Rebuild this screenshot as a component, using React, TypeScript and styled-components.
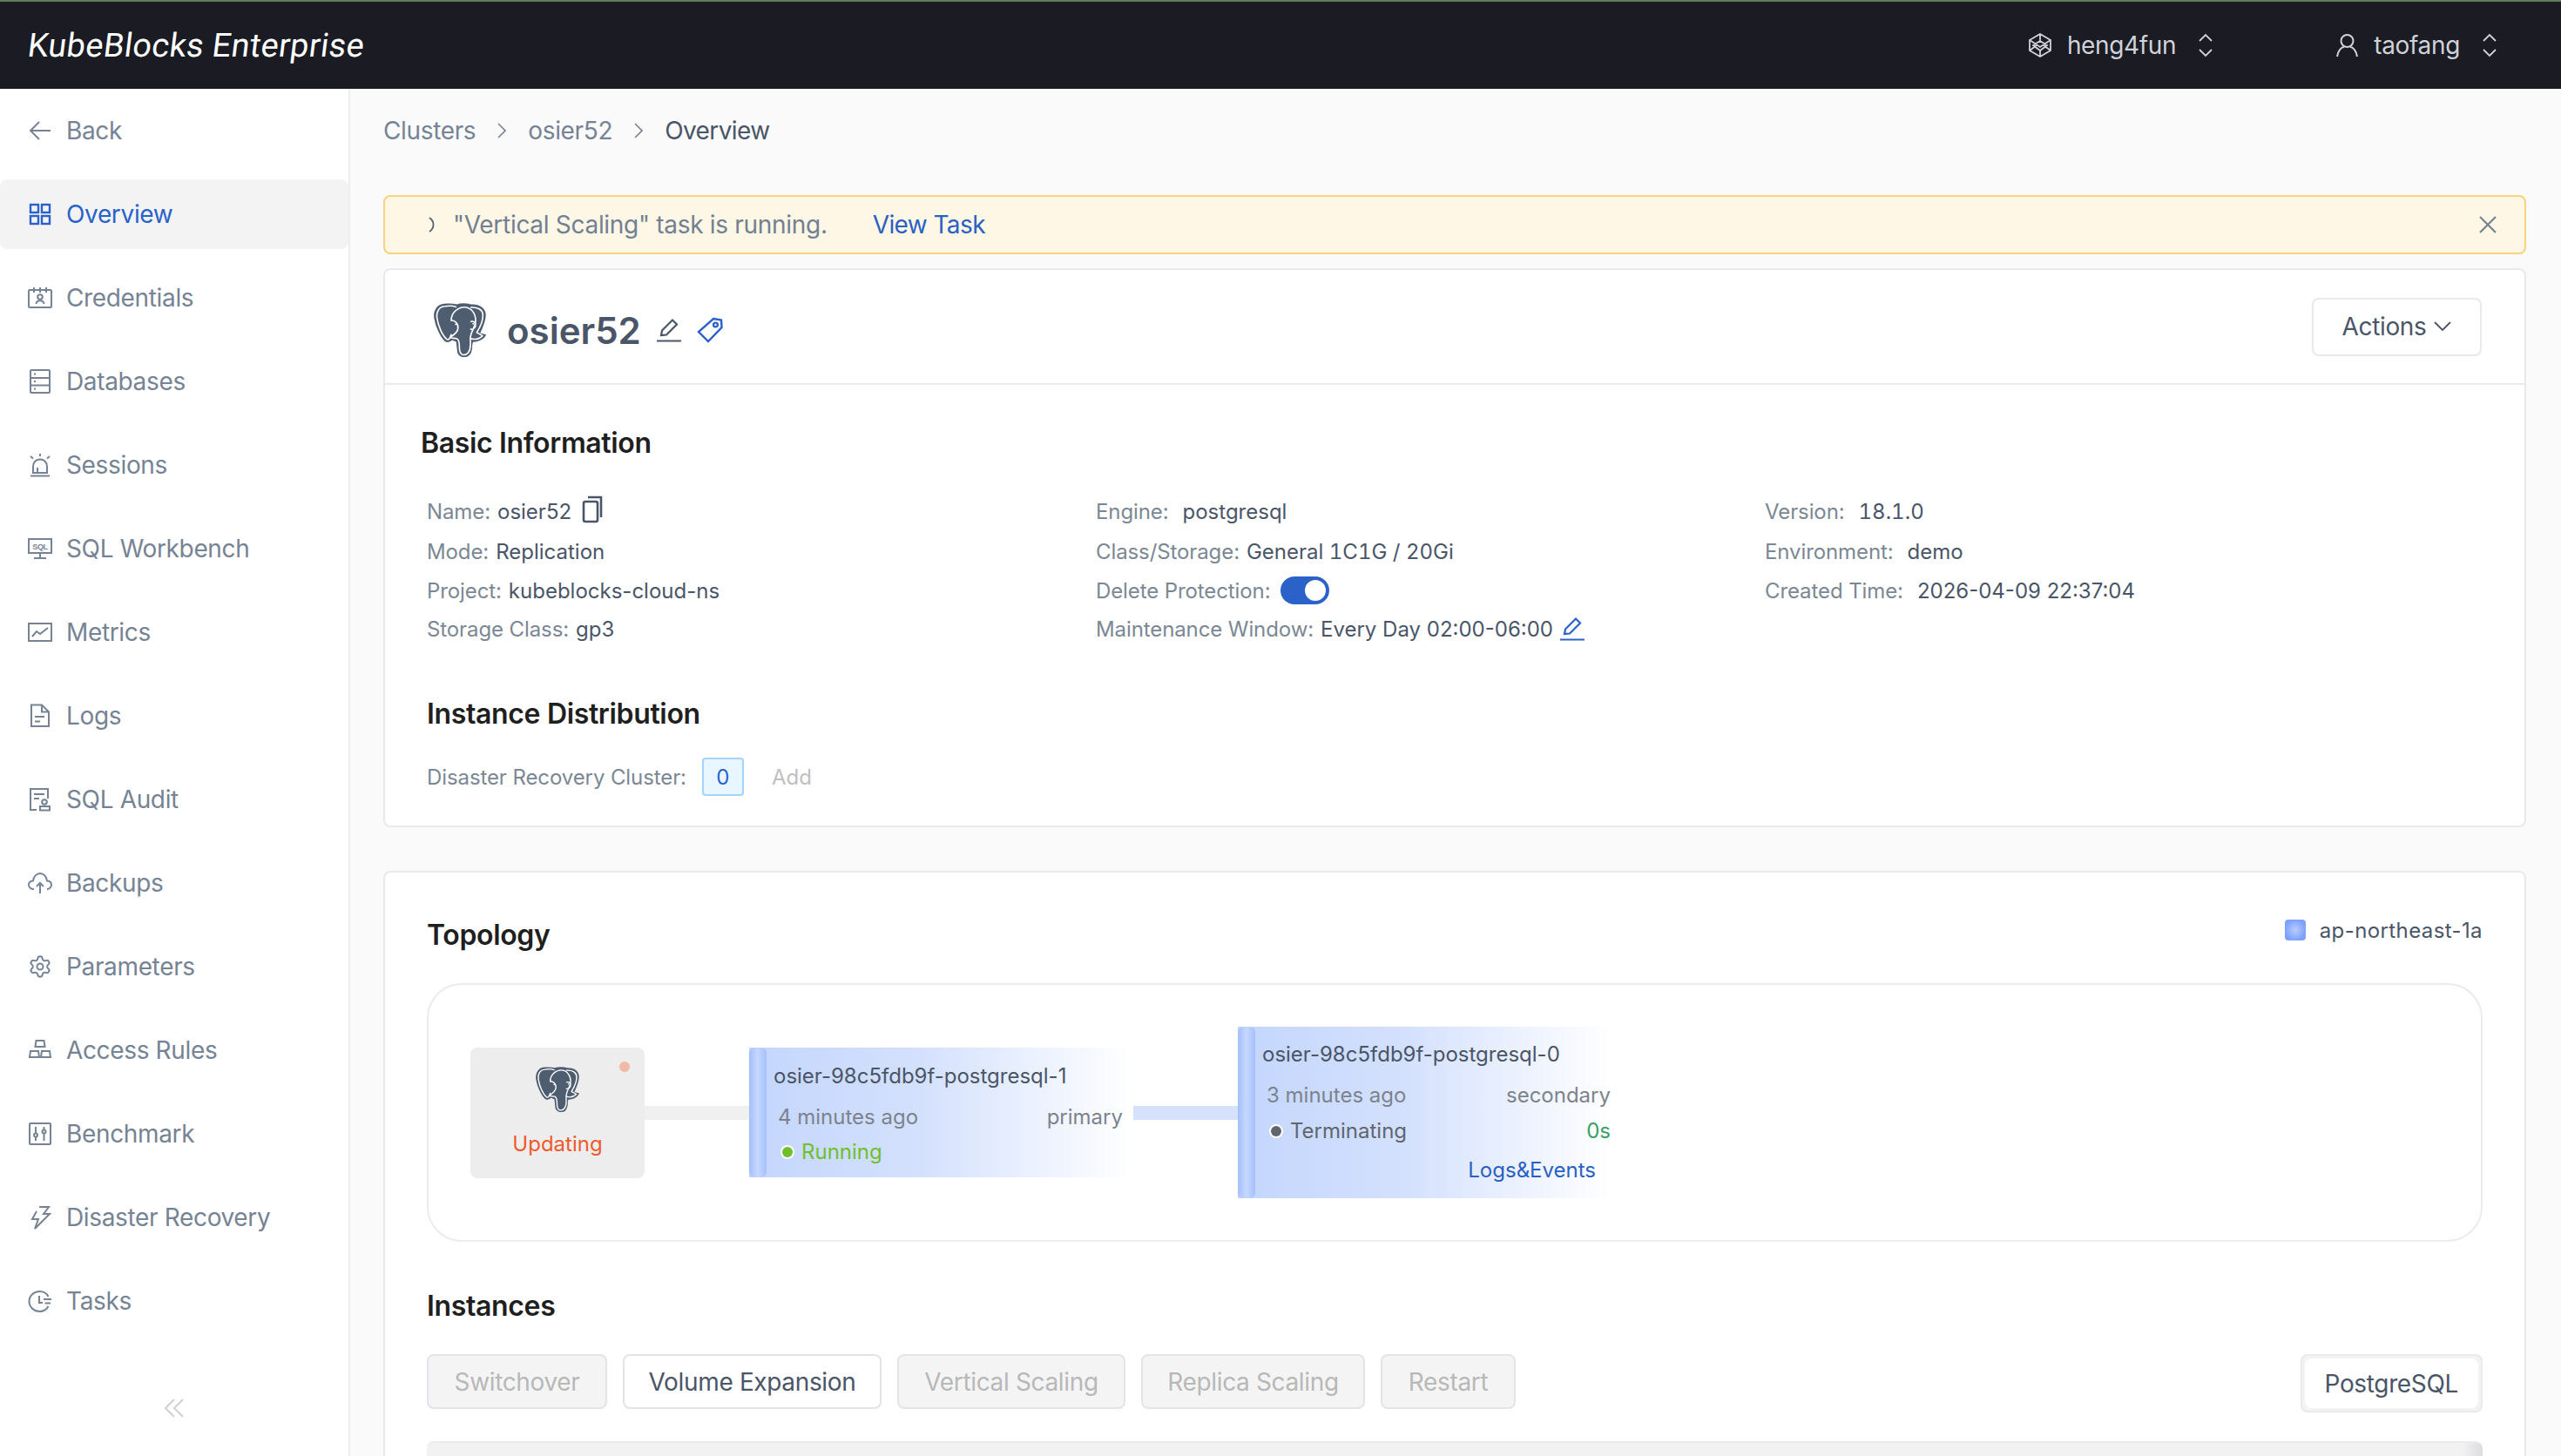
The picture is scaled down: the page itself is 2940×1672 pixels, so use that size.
import React from 'react'
import styled, { createGlobalStyle } from 'styled-components'
import { Settings } from 'lucide-react'

const GlobalStyle = createGlobalStyle`
  html, body {
    margin: 0;
    padding: 0;
    height: 100%;
    overflow: hidden;
    background: #fafafa;
    font-family: Inter, "Liberation Sans", sans-serif;
  }
  * { box-sizing: border-box; }
`

const Page = styled.div`
  display: flex;
  flex-direction: column;
  height: 1672px;
  overflow: hidden;
`

const TopBar = styled.header`
  flex: none;
  display: flex;
  align-items: center;
  height: 102px;
  padding: 0 73px 0 32px;
  border-top: 2px solid #5f7f55;
  background: #1a1b23;
`

const Logo = styled.div`
  font-family: Roboto, sans-serif;
  font-size: 38px;
  font-weight: 400;
  letter-spacing: 0.3px;
  color: #fff;
  transform: skewX(-7deg);
`

const Switchers = styled.div`
  margin-left: auto;
  display: flex;
  align-items: center;
  gap: 141px;
`

const Switcher = styled.div`
  display: flex;
  align-items: center;
  color: #cfd2d8;
  font-size: 28px;
  line-height: 40px;
  letter-spacing: -0.35px;
`

const SwitcherLabel = styled.span`
  margin: 0 25px 0 18px;
`

const Body = styled.div`
  flex: 1;
  display: flex;
  min-height: 0;
`

const Sidebar = styled.aside`
  flex: none;
  width: 402px;
  display: flex;
  flex-direction: column;
  padding-top: 8px;
  border-right: 2px solid #eeeef1;
  background: #fff;
`

const NavList = styled.nav`
  display: flex;
  flex-direction: column;
  gap: 16px;
`

const NavItem = styled.a<{ $active?: boolean }>`
  display: flex;
  align-items: center;
  gap: 16px;
  height: 80px;
  padding-left: 32px;
  border-radius: 8px;
  font-size: 28px;
  letter-spacing: -0.35px;
  color: ${p => (p.$active ? '#2a62c9' : '#768394')};
  background: ${p => (p.$active ? '#f3f3f3' : 'transparent')};
`

const Collapse = styled.div`
  margin-top: auto;
  height: 48px;
  margin-bottom: 31px;
  display: flex;
  align-items: center;
  justify-content: center;
  color: #cdd1d6;
`

const Icon = styled.svg.attrs<{ stroke?: string; strokeWidth?: number | string }>(p => ({
  fill: 'none',
  stroke: p.stroke ?? 'currentColor',
  strokeWidth: p.strokeWidth ?? 2,
}))`
  flex: none;
  display: block;
`

const Main = styled.main`
  flex: 1;
  min-width: 0;
  overflow: hidden;
  padding: 24px 40px 0 38px;
`

const Crumbs = styled.div`
  display: flex;
  align-items: center;
  height: 48px;
  margin-bottom: 50px;
  font-size: 28px;
  letter-spacing: -0.35px;
  color: #768394;
`

const Crumb = styled.span<{ $current?: boolean }>`
  color: ${p => (p.$current ? '#4a5568' : '#768394')};
  letter-spacing: ${p => (p.$current ? '-0.6px' : 'inherit')};
`

const CrumbSep = styled.span`
  display: flex;
  width: 60px;
  justify-content: center;
  color: #768394;
`

const Alert = styled.div`
  display: flex;
  align-items: center;
  height: 68px;
  padding: 0 32px 0 50px;
  border: 2px solid #f9d27d;
  border-radius: 8px;
  background: #fef7e6;
  font-size: 28px;
  letter-spacing: -0.3px;
  color: #728091;
`

const AlertText = styled.span`
  margin-left: 20px;
`

const TextLink = styled.a`
  color: #2a5fc4;
`

const AlertLink = styled(TextLink)`
  margin-left: 52px;
  letter-spacing: -0.6px;
`

const AlertClose = styled.span`
  margin-left: auto;
  display: flex;
  color: #768394;
`

const Card = styled.section`
  border: 2px solid #e9e9ed;
  border-radius: 8px;
  background: #fff;
`

const SummaryCard = styled(Card)`
  margin-top: 16px;
`

const TopologyCard = styled(Card)`
  margin-top: 50px;
  padding: 44px 48px 0;
  height: 800px;
`

const CardHead = styled.div`
  display: flex;
  align-items: center;
  height: 132px;
  padding: 8px 49px 0 56px;
  border-bottom: 2px solid #e9e9ed;
`

const ClusterName = styled.h1`
  margin: 0 18px 0 24px;
  font-size: 42px;
  font-weight: 600;
  color: #4a5568;
`

const HeadIcons = styled.div`
  display: flex;
  align-items: center;
  gap: 18px;
`

const ActionsButton = styled.button`
  margin: -8px 0 0 auto;
  display: flex;
  align-items: center;
  gap: 9px;
  height: 67px;
  width: 195px;
  justify-content: center;
  border: 2px solid #e9e9ed;
  border-radius: 8px;
  background: #fff;
  font: inherit;
  font-size: 28px;
  letter-spacing: -0.35px;
  color: #4a5568;
`

const CardBody = styled.div`
  padding: 45px 48px 34px;
`

const SectionTitle = styled.h2<{ $shift?: number }>`
  margin: 0 0 0 ${p => p.$shift ?? 0}px;
  font-size: 32px;
  line-height: 44px;
  font-weight: 600;
  letter-spacing: -0.35px;
  color: #1f1f1f;
`

const InfoGrid = styled.div`
  margin: 33px 0 54px;
  display: grid;
  grid-template-columns: repeat(3, 768px);
  grid-template-rows: 47px 45px 44px 44px;
  align-items: center;
`

const InfoRow = styled.div`
  display: flex;
  align-items: center;
  gap: 8px;
  font-size: 24px;
  color: #4a5568;
`

const InfoLabel = styled.span<{ $wide?: boolean }>`
  color: #7b8794;
  letter-spacing: -0.1px;
  margin-right: ${p => (p.$wide ? 8 : 0)}px;
`

const TabularValue = styled.span`
  font-variant-numeric: tabular-nums;
`

const CopyButton = styled.span`
  display: flex;
  margin: -6px 0 0 4px;
  color: #4a5568;
`

const Toggle = styled.span`
  display: flex;
  justify-content: flex-end;
  align-items: center;
  width: 56px;
  height: 32px;
  margin-left: 3px;
  padding: 4px;
  border-radius: 16px;
  background: #2a62c9;
`

const ToggleKnob = styled.span`
  width: 24px;
  height: 24px;
  border-radius: 50%;
  background: #fff;
`

const DrRow = styled(InfoRow)`
  margin-top: 28px;
  height: 44px;
  gap: 0;
`

const CountBadge = styled.span`
  display: flex;
  align-items: center;
  justify-content: center;
  width: 48px;
  height: 44px;
  margin-left: 18px;
  border: 2px solid #a3d5fb;
  border-radius: 4px;
  background: #e8f6ff;
  color: #2a62c9;
`

const AddLink = styled.span`
  margin-left: 32px;
  color: #bfbfbf;
`

const TopologyHead = styled.div`
  display: flex;
  justify-content: space-between;
  align-items: flex-start;
  margin-bottom: 27px;
`

const TopologyTitle = styled(SectionTitle)`
  line-height: 56px;
`

const ZoneLabel = styled.div`
  display: flex;
  align-items: center;
  gap: 16px;
  height: 44px;
  font-size: 24px;
  letter-spacing: 0.4px;
  color: #4a5568;
`

const ZoneSwatch = styled.span`
  width: 24px;
  height: 24px;
  border-radius: 4px;
  background: radial-gradient(circle, #b9ccfd 0%, #7ea2fa 70%);
`

const TopologyBox = styled.div`
  display: flex;
  align-items: center;
  height: 297px;
  padding-left: 48px;
  border: 2px solid #ebebef;
  border-radius: 40px;
`

const ClusterNode = styled.div`
  position: relative;
  flex: none;
  display: flex;
  flex-direction: column;
  align-items: center;
  width: 200px;
  height: 150px;
  padding-top: 22px;
  border-radius: 8px;
  background: #ededed;
`

const ClusterDot = styled.span`
  position: absolute;
  top: 16px;
  right: 17px;
  width: 12px;
  height: 12px;
  border-radius: 50%;
  background: #f0b9a8;
`

const ClusterStatus = styled.span`
  margin-top: 21px;
  font-size: 24px;
  line-height: 32px;
  color: #ee5a2c;
`

const Link = styled.div<{ $color: string }>`
  flex: none;
  width: 120px;
  height: 16px;
  background: ${p => p.$color};
`

const InstanceNode = styled.div<{ $width: number; $height: number }>`
  flex: none;
  display: flex;
  width: ${p => p.$width}px;
  height: ${p => p.$height}px;
  background: linear-gradient(90deg, #c3d6fd 0%, #d4e1fd 45%, #ffffff 100%);
`

const NodeBar = styled.div`
  flex: none;
  width: 20px;
  border-radius: 6px;
  background: linear-gradient(90deg, #a5bffa 0%, #c6d8ff 50%, #a5bffa 100%);
`

const NodeBody = styled.div<{ $top: number; $right: number }>`
  flex: 1;
  min-width: 0;
  padding: ${p => p.$top}px ${p => p.$right}px 0 8px;
  font-size: 24px;
  line-height: 32px;
  white-space: nowrap;
`

const NodeTitle = styled.div`
  color: #4a5568;
`

const NodeRow = styled.div<{ $gap: number }>`
  display: flex;
  justify-content: space-between;
  margin-top: ${p => p.$gap}px;
  padding-left: 5px;
  color: #7c838e;
`

const NodeStatus = styled.span<{ $color: string }>`
  display: flex;
  align-items: center;
  gap: 10px;
  color: ${p => p.$color};
`

const StatusDot = styled.span<{ $color: string }>`
  width: 12px;
  height: 12px;
  margin-left: 5px;
  border-radius: 50%;
  background: ${p => p.$color};
  box-shadow: 0 0 0 2px #fff;
`

const Elapsed = styled.span`
  color: #3a9e6a;
`

const NodeAction = styled(TextLink)`
  display: block;
  margin-top: 13px;
  padding-right: 17px;
  text-align: right;
`

const InstancesTitle = styled(TopologyTitle)`
  margin-top: 46px;
`

const InstanceToolbar = styled.div`
  margin-top: 27px;
  display: flex;
  justify-content: space-between;
  align-items: flex-start;
`

const OpButtons = styled.div`
  display: flex;
  gap: 18px;
`

const OpButton = styled.button<{ $enabled?: boolean; $width: number }>`
  width: ${p => p.$width}px;
  height: 63px;
  padding: 0;
  border: 2px solid #e4e4e8;
  border-radius: 8px;
  font: inherit;
  font-size: 28px;
  letter-spacing: -0.35px;
  color: ${p => (p.$enabled ? '#4a5568' : '#b8b8b8')};
  background: ${p => (p.$enabled ? '#fff' : '#f4f4f5')};
`

const EngineTabs = styled.div`
  display: flex;
  padding: 3px 3px;
  height: 67px;
  border: 2px solid #e9e9ee;
  border-radius: 8px;
  background: #f3f3f5;
`

const EngineTab = styled.div`
  display: flex;
  align-items: center;
  padding: 0 23px;
  border-radius: 8px;
  background: #fff;
  font-size: 28px;
  letter-spacing: -0.35px;
  color: #4a5568;
`

const TableHead = styled.div`
  margin-top: 33px;
  height: 80px;
  border-radius: 8px 8px 0 0;
  border-top: 2px solid #ebebef;
  background: linear-gradient(90deg, #f2f2f3 99%, #dcdcde 100%);
`

function PgLogo({ width, height }: { width: number; height: number }) {
  return (
    <svg width={width} height={height} viewBox="22 10 180 198" preserveAspectRatio="none">
      <path
        fill="#4e5d70"
        stroke="#4e5d70"
        strokeWidth="6"
        d="M60 15C35 15 22 40 26 65C30 95 48 135 62 148C72 155 78 150 84 142L102 150L106 190C110 206 125 208 138 203C150 197 152 180 152 160L155 150C170 152 192 142 198 128L178 122C190 95 200 70 198 50C195 25 170 15 150 18C140 12 115 12 100 18C85 13 72 15 60 15Z"
      />
      <g fill="none" stroke="#fff" strokeWidth="5" strokeLinecap="round" strokeLinejoin="round">
        <path d="M98 24C84 18 70 20 60 22C38 24 30 44 33 65C37 95 52 130 66 142C74 148 78 138 82 126" />
        <path d="M150 26C172 24 190 34 191 52C192 72 182 98 170 118C180 124 186 128 190 130C180 140 165 146 150 140" />
        <path d="M82 74C82 44 106 24 130 25C158 28 170 60 165 85C162 100 150 115 148 135L148 165C148 190 135 202 122 200C112 198 110 188 110 170C110 155 108 142 100 140C92 138 82 140 78 136C90 128 102 120 105 105C108 88 96 72 82 74Z" />
        <path d="M150 78C162 74 168 84 165 96C162 104 154 108 149 106" />
      </g>
      <circle cx="98" cy="88" r="3" fill="#fff" />
      <circle cx="158" cy="86" r="3" fill="#fff" />
    </svg>
  )
}

const navItems: { label: string; active?: boolean; icon: React.ReactNode }[] = [
  {
    label: 'Back',
    icon: (
      <Icon width="28" height="28" viewBox="0 0 28 28">
        <path d="M13 4L3 14L13 24M3 14H26" />
      </Icon>
    ),
  },
  {
    label: 'Overview',
    active: true,
    icon: (
      <Icon width="28" height="28" viewBox="0 0 28 28" strokeWidth="2.4">
        <rect x="3" y="3" width="9" height="9" />
        <rect x="16" y="3" width="9" height="9" />
        <rect x="3" y="16" width="9" height="9" />
        <rect x="16" y="16" width="9" height="9" />
      </Icon>
    ),
  },
  {
    label: 'Credentials',
    icon: (
      <Icon width="28" height="28" viewBox="0 0 28 28">
        <rect x="1" y="5" width="26" height="20" rx="1" />
        <path d="M7 2V8M14 2V8M21 2V8M9.5 21C10 16 18 16 18.5 21" />
        <circle cx="14" cy="13" r="2.8" />
      </Icon>
    ),
  },
  {
    label: 'Databases',
    icon: (
      <Icon width="28" height="28" viewBox="0 0 28 28">
        <rect x="3" y="1" width="22" height="26" rx="1" />
        <path d="M3 10H25M3 18.5H25M7 5.5H9M7 14H9M7 22.5H9" />
      </Icon>
    ),
  },
  {
    label: 'Sessions',
    icon: (
      <Icon width="28" height="28" viewBox="0 0 28 28">
        <path d="M6 23V16C6 4.5 22 4.5 22 16V23ZM3 26.5H25M14 1V4M3 4L6 6.5M25 4L22 6.5M11 23V17" />
      </Icon>
    ),
  },
  {
    label: 'SQL Workbench',
    icon: (
      <Icon width="28" height="28" viewBox="0 0 28 28">
        <rect x="1" y="3" width="26" height="16" />
        <path d="M14 19V24M7 25H21" />
        <text x="14" y="14.5" textAnchor="middle" fontSize="9" fontWeight="700" fontFamily="Liberation Sans" fill="currentColor" stroke="none">SQL</text>
      </Icon>
    ),
  },
  {
    label: 'Metrics',
    icon: (
      <Icon width="28" height="28" viewBox="0 0 28 28">
        <rect x="1" y="4" width="26" height="20" />
        <path d="M5 19L10 13L14 16L23 9" />
      </Icon>
    ),
  },
  {
    label: 'Logs',
    icon: (
      <Icon width="28" height="28" viewBox="0 0 28 28">
        <path d="M4 1.5H16L24 9.5V26H4ZM16 1.5V9.5H24M8 15H19M8 20.5H14" />
      </Icon>
    ),
  },
  {
    label: 'SQL Audit',
    icon: (
      <Icon width="28" height="28" viewBox="0 0 28 28">
        <path d="M23 13V2H3V26H10M7 8H19M7 13H13" />
        <circle cx="19" cy="17" r="2.8" />
        <rect x="14" y="22" width="11" height="4.5" />
      </Icon>
    ),
  },
  {
    label: 'Backups',
    icon: (
      <Icon width="28" height="28" viewBox="0 0 28 28">
        <path d="M7 21C3 21 1 18.500 1 16C1 13 3.500 11.500 6 11.500C6.500 6.500 10 3 14 3C18 3 21.500 6.500 22 11.500C24.500 11.500 27 13 27 16C27 18.500 25 21 22 21M14 26V14M10 18L14 14L18 18" />
      </Icon>
    ),
  },
  { label: 'Parameters', icon: <Settings size={28} strokeWidth={1.7} /> },
  {
    label: 'Access Rules',
    icon: (
      <Icon width="28" height="28" viewBox="0 0 28 28">
        <path d="M9.500 3H18.500L19.500 10H8.500ZM3 15H12L13 22H2ZM16 15H25L26 22H15Z" />
      </Icon>
    ),
  },
  {
    label: 'Benchmark',
    icon: (
      <Icon width="28" height="28" viewBox="0 0 28 28">
        <rect x="2" y="2" width="24" height="24" rx="1" />
        <path d="M9 6V13M9 18V22M18.500 6V9M18.500 14V22" />
        <circle cx="9" cy="15.500" r="2" />
        <circle cx="18.500" cy="11.500" r="2" />
      </Icon>
    ),
  },
  {
    label: 'Disaster Recovery',
    icon: (
      <Icon width="28" height="28" viewBox="0 0 28 28">
        <path d="M13 2H24L18 10H25L8 27L12 16H5L10 7" />
      </Icon>
    ),
  },
  {
    label: 'Tasks',
    icon: (
      <Icon width="28" height="28" viewBox="0 0 28 28">
        <path d="M23.500 9C21.500 5 18 3 13.500 3C7 3 1.500 8 1.500 14.500C1.500 21 7 26 13.500 26C18 26 21.500 24 23.500 20M13 8V16H17M18 12H27M19.500 16.500H26" />
      </Icon>
    ),
  },
]

function UpDown() {
  return (
    <Icon width="18" height="28" viewBox="0 0 18 28" strokeWidth="1.8">
      <path d="M2 9L9 2L16 9M2 19L9 26L16 19" />
    </Icon>
  )
}

function Chevron() {
  return (
    <Icon width="10" height="18" viewBox="0 0 10 18" strokeWidth="1.6">
      <path d="M1 1L9 9L1 17" />
    </Icon>
  )
}

function PencilIcon({ color }: { color: string }) {
  return (
    <Icon width="28" height="28" viewBox="0 0 28 28" stroke={color} strokeWidth="2.2">
      <path d="M5 20L6 14.500L18 2.500L23 7.500L11 19.500ZM0 26.500H28" />
    </Icon>
  )
}

export default function App() {
  return (
    <Page>
      <GlobalStyle />
      <TopBar>
        <Logo>KubeBlocks Enterprise</Logo>
        <Switchers>
          <Switcher>
            <Icon width="26" height="28" viewBox="0 0 26 28" strokeWidth="1.8">
              <path d="M13 1L25 8V20L13 27L1 20V8ZM1 8L13 16L25 8M1 20L9 14M25 20L17 14M13 1V9M13 9L5 14L13 20L21 14ZM13 20V27" />
            </Icon>
            <SwitcherLabel>heng4fun</SwitcherLabel>
            <UpDown />
          </Switcher>
          <Switcher>
            <Icon width="25" height="28" viewBox="0 0 25 28" strokeWidth="2">
              <circle cx="12.500" cy="9" r="7" />
              <path d="M1 27C2 20 6 16 9 16M24 27C23 20 19 16 16 16" />
            </Icon>
            <SwitcherLabel>taofang</SwitcherLabel>
            <UpDown />
          </Switcher>
        </Switchers>
      </TopBar>
      <Body>
        <Sidebar>
          <NavList>
            {navItems.map(item => (
              <NavItem key={item.label} $active={item.active}>
                {item.icon}
                {item.label}
              </NavItem>
            ))}
          </NavList>
          <Collapse>
            <Icon width="22" height="22" viewBox="0 0 22 22" strokeWidth="2">
              <path d="M11 1L1 11L11 21M21 1L11 11L21 21" />
            </Icon>
          </Collapse>
        </Sidebar>
        <Main>
          <Crumbs>
            <Crumb>Clusters</Crumb>
            <CrumbSep><Chevron /></CrumbSep>
            <Crumb>osier52</Crumb>
            <CrumbSep><Chevron /></CrumbSep>
            <Crumb $current>Overview</Crumb>
          </Crumbs>
          <Alert>
            <Icon width="8" height="18" viewBox="0 0 8 18" stroke="#5a6474" strokeWidth="1.8">
              <path d="M1 1C7 5 7 13 1 17" />
            </Icon>
            <AlertText>"Vertical Scaling" task is running.</AlertText>
            <AlertLink>View Task</AlertLink>
            <AlertClose>
              <Icon width="20" height="20" viewBox="0 0 20 20" strokeWidth="2.2">
                <path d="M1 1L19 19M19 1L1 19" />
              </Icon>
            </AlertClose>
          </Alert>
          <SummaryCard>
            <CardHead>
              <PgLogo width={60} height={62} />
              <ClusterName>osier52</ClusterName>
              <HeadIcons>
                <PencilIcon color="#4a5568" />
                <Icon width="30" height="30" viewBox="0 0 30 30" stroke="#2a62c9" strokeWidth="2.4">
                  <path d="M19 2L28 3.500L28.500 12L13 28L2 17Z" />
                  <circle cx="21.500" cy="9" r="2.400" />
                </Icon>
              </HeadIcons>
              <ActionsButton>
                Actions
                <Icon width="20" height="12" viewBox="0 0 20 12" strokeWidth="1.8">
                  <path d="M1 1L10 10L19 1" />
                </Icon>
              </ActionsButton>
            </CardHead>
            <CardBody>
              <SectionTitle $shift={-7}>Basic Information</SectionTitle>
              <InfoGrid>
                <InfoRow>
                  <InfoLabel>Name:</InfoLabel>osier52
                  <CopyButton>
                    <Icon width="24" height="32" viewBox="0 0 24 32" strokeWidth="2.6">
                      <path d="M7 2H22V25" />
                      <rect x="2" y="7" width="16" height="23" rx="2" />
                    </Icon>
                  </CopyButton>
                </InfoRow>
                <InfoRow><InfoLabel $wide>Engine:</InfoLabel>postgresql</InfoRow>
                <InfoRow><InfoLabel $wide>Version:</InfoLabel><TabularValue>18.1.0</TabularValue></InfoRow>
                <InfoRow><InfoLabel>Mode:</InfoLabel>Replication</InfoRow>
                <InfoRow><InfoLabel>Class/Storage:</InfoLabel><TabularValue>General 1C1G / 20Gi</TabularValue></InfoRow>
                <InfoRow><InfoLabel $wide>Environment:</InfoLabel>demo</InfoRow>
                <InfoRow><InfoLabel>Project:</InfoLabel>kubeblocks-cloud-ns</InfoRow>
                <InfoRow>
                  <InfoLabel>Delete Protection:</InfoLabel>
                  <Toggle><ToggleKnob /></Toggle>
                </InfoRow>
                <InfoRow><InfoLabel $wide>Created Time:</InfoLabel>2026-04-09 22:37:04</InfoRow>
                <InfoRow><InfoLabel>Storage Class:</InfoLabel>gp3</InfoRow>
                <InfoRow>
                  <InfoLabel>Maintenance Window:</InfoLabel>Every Day 02:00-06:00
                  <PencilIcon color="#2a62c9" />
                </InfoRow>
              </InfoGrid>
              <SectionTitle>Instance Distribution</SectionTitle>
              <DrRow>
                <InfoLabel>Disaster Recovery Cluster:</InfoLabel>
                <CountBadge>0</CountBadge>
                <AddLink>Add</AddLink>
              </DrRow>
            </CardBody>
          </SummaryCard>
          <TopologyCard>
            <TopologyHead>
              <TopologyTitle>Topology</TopologyTitle>
              <ZoneLabel><ZoneSwatch />ap-northeast-1a</ZoneLabel>
            </TopologyHead>
            <TopologyBox>
              <ClusterNode>
                <ClusterDot />
                <PgLogo width={50} height={52} />
                <ClusterStatus>Updating</ClusterStatus>
              </ClusterNode>
              <Link $color="#f0f0f0" />
              <InstanceNode $width={441} $height={149}>
                <NodeBar />
                <NodeBody $top={17} $right={12}>
                  <NodeTitle>osier-98c5fdb9f-postgresql-1</NodeTitle>
                  <NodeRow $gap={15}><span>4 minutes ago</span><span>primary</span></NodeRow>
                  <NodeRow $gap={8}>
                    <NodeStatus $color="#6fbf2d"><StatusDot $color="#6fbf2d" />Running</NodeStatus>
                  </NodeRow>
                </NodeBody>
              </InstanceNode>
              <Link $color="#d6e1fb" />
              <InstanceNode $width={430} $height={197}>
                <NodeBar />
                <NodeBody $top={16} $right={2}>
                  <NodeTitle>osier-98c5fdb9f-postgresql-0</NodeTitle>
                  <NodeRow $gap={15}><span>3 minutes ago</span><span>secondary</span></NodeRow>
                  <NodeRow $gap={9}>
                    <NodeStatus $color="#5f6670"><StatusDot $color="#5f6670" />Terminating</NodeStatus>
                    <Elapsed>0s</Elapsed>
                  </NodeRow>
                  <NodeAction>Logs&amp;Events</NodeAction>
                </NodeBody>
              </InstanceNode>
            </TopologyBox>
            <InstancesTitle>Instances</InstancesTitle>
            <InstanceToolbar>
              <OpButtons>
                <OpButton $width={207}>Switchover</OpButton>
                <OpButton $width={297} $enabled>Volume Expansion</OpButton>
                <OpButton $width={262}>Vertical Scaling</OpButton>
                <OpButton $width={257}>Replica Scaling</OpButton>
                <OpButton $width={155}>Restart</OpButton>
              </OpButtons>
              <EngineTabs><EngineTab>PostgreSQL</EngineTab></EngineTabs>
            </InstanceToolbar>
            <TableHead />
          </TopologyCard>
        </Main>
      </Body>
    </Page>
  )
}
